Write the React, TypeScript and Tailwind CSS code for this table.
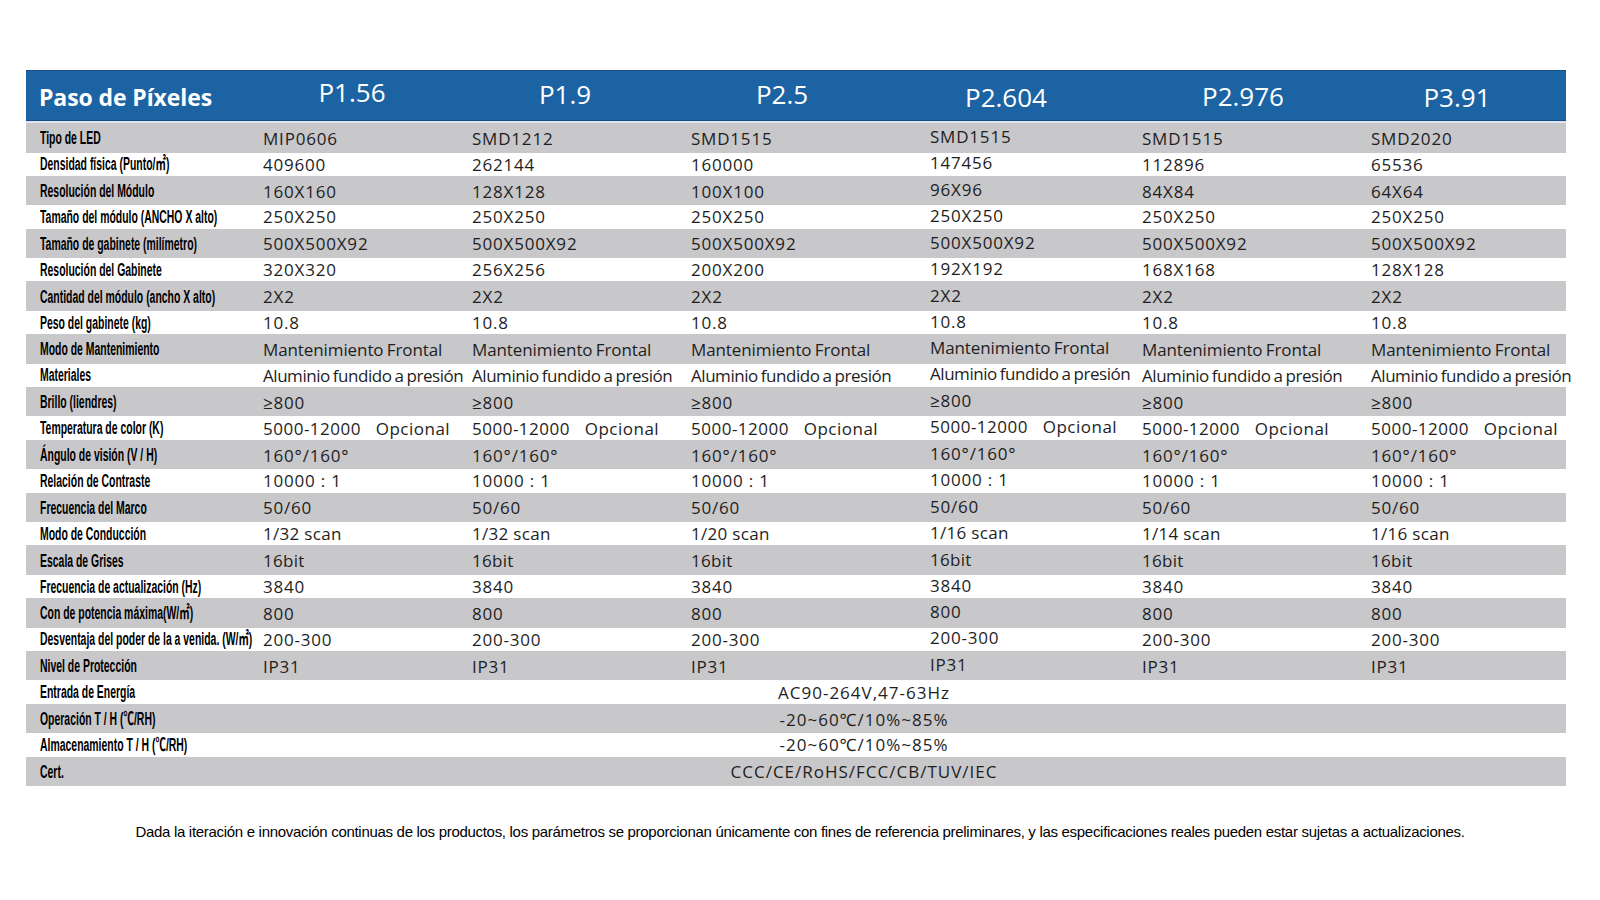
import React from "react";

const pitches = ["P1.56", "P1.9", "P2.5", "P2.604", "P2.976", "P3.91"];
// small vertical nudges seen in the header
const pitchPad = ["pb-[6px]", "pb-[2px]", "pb-[2px]", "pt-[3px]", "pt-[1px]", "pt-[3px]"];

type Row = { label: string; values?: string[]; merged?: string };

const same = (v: string) => [v, v, v, v, v, v];

const rows: Row[] = [
  { label: "Tipo de LED", values: ["MIP0606", "SMD1212", "SMD1515", "SMD1515", "SMD1515", "SMD2020"] },
  { label: "Densidad física (Punto/㎡)", values: ["409600", "262144", "160000", "147456", "112896", "65536"] },
  { label: "Resolución del Módulo", values: ["160X160", "128X128", "100X100", "96X96", "84X84", "64X64"] },
  { label: "Tamaño del módulo (ANCHO X alto)", values: same("250X250") },
  { label: "Tamaño de gabinete (milímetro)", values: same("500X500X92") },
  { label: "Resolución del Gabinete", values: ["320X320", "256X256", "200X200", "192X192", "168X168", "128X128"] },
  { label: "Cantidad del módulo (ancho X alto)", values: same("2X2") },
  { label: "Peso del gabinete (kg)", values: same("10.8") },
  { label: "Modo de Mantenimiento", values: same("Mantenimiento Frontal") },
  { label: "Materiales", values: same("Aluminio fundido a presión") },
  { label: "Brillo (liendres)", values: same("≥800") },
  { label: "Temperatura de color (K)", values: same("5000-12000   Opcional") },
  { label: "Ángulo de visión (V / H)", values: same("160°/160°") },
  { label: "Relación de Contraste", values: same("10000 : 1") },
  { label: "Frecuencia del Marco", values: same("50/60") },
  { label: "Modo de Conducción", values: ["1/32 scan", "1/32 scan", "1/20 scan", "1/16 scan", "1/14 scan", "1/16 scan"] },
  { label: "Escala de Grises", values: same("16bit") },
  { label: "Frecuencia de actualización (Hz)", values: same("3840") },
  { label: "Con de potencia máxima(W/㎡)", values: same("800") },
  { label: "Desventaja del poder de la a venida. (W/㎡)", values: same("200-300") },
  { label: "Nivel de Protección", values: same("IP31") },
  { label: "Entrada de Energía", merged: "AC90-264V,47-63Hz" },
  { label: "Operación T / H (℃/RH)", merged: "-20~60℃/10%~85%" },
  { label: "Almacenamiento T / H (℃/RH)", merged: "-20~60℃/10%~85%" },
  { label: "Cert.", merged: "CCC/CE/RoHS/FCC/CB/TUV/IEC" },
];

const labelFont = { fontFamily: '"Liberation Sans", Arial, "Noto Sans CJK SC", sans-serif' };
const valueFont = { fontFamily: '"Open Sans", "Noto Sans", "Noto Sans CJK SC", sans-serif' };

// the source font has wide caps/digits and tight lowercase words
function spacing(v: string) {
  if (v.startsWith("5000-")) return "tracking-[0.5px]";
  if (v.startsWith("Aluminio")) return "tracking-[-0.45px] [word-spacing:-1px]";
  if (v.startsWith("Mantenimiento")) return "tracking-[-0.1px] [word-spacing:-1px]";
  if (!/[a-z]/.test(v)) return "tracking-[0.8px]";
  return "tracking-[0.3px]";
}

function Label({ text }: { text: string }) {
  return (
    <div className="flex items-center pl-[14px]">
      <span
        className="inline-block origin-left scale-x-[0.58] whitespace-nowrap text-[18px] font-bold leading-none text-black"
        style={labelFont}
      >
        {text}
      </span>
    </div>
  );
}

function SpecRow({ row, gray }: { row: Row; gray: boolean }) {
  return (
    <div
      className={`grid grid-cols-[236px_209px_219px_239px_212px_229px_196px] items-center ${
        gray ? "h-[29.5px] bg-[#c8c7ca] pt-[1px]" : "h-[23.3px] bg-white"
      }`}
    >
      <Label text={row.label} />
      {row.values ? (
        row.values.map((v, i) => (
          <div
            key={i}
            className={`whitespace-pre pl-[1px] text-[17px] leading-none text-[#1e1e1e] ${spacing(v)} ${
              i === 3 ? "pb-[3px]" : ""
            }`}
            style={valueFont}
          >
            {v}
          </div>
        ))
      ) : (
        <div
          className="col-span-6 flex justify-center pr-[100px] text-[17px] leading-none tracking-[1px] text-[#1e1e1e]"
          style={valueFont}
        >
          {row.merged}
        </div>
      )}
    </div>
  );
}

export default function App() {
  return (
    <div className="min-h-screen w-full bg-white pt-[70px]">
      <div className="ml-[26px] w-[1540px]">
        <div className="grid h-[51px] grid-cols-[224px_204px_222px_212px_236px_238px_190px_1fr] border-y border-[#154f8a] bg-[#1c63a3] text-white">
          <div className="flex items-center pl-[13px] pt-[3px]">
            <span className="text-[23px] font-bold tracking-[-0.1px]" style={valueFont}>
              Paso de Píxeles
            </span>
          </div>
          {pitches.map((p, i) => (
            <div key={p} className={`flex items-center justify-center ${pitchPad[i]}`}>
              <span className="text-[26px] font-normal" style={valueFont}>
                {p}
              </span>
            </div>
          ))}
          <div />
        </div>
        <div className="h-[2px] bg-[#dce6f1]" />
        {rows.map((r, i) => (
          <SpecRow key={r.label} row={r} gray={i % 2 === 0} />
        ))}
      </div>
      <p
        className="mt-[36px] text-center text-[15px] leading-[20px] tracking-[-0.3px] text-black"
        style={labelFont}
      >
        Dada la iteración e innovación continuas de los productos, los parámetros se proporcionan únicamente con fines de referencia preliminares, y las especificaciones reales pueden estar sujetas a actualizaciones.
      </p>
    </div>
  );
}
